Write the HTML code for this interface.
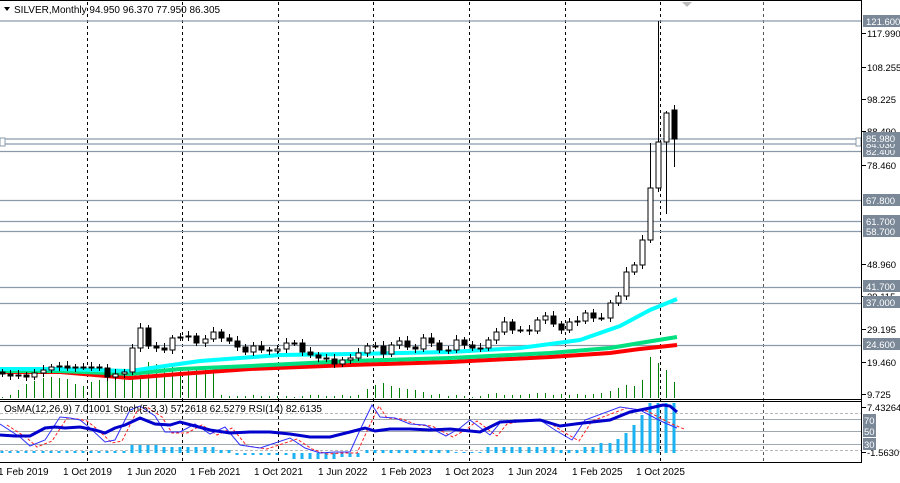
<!DOCTYPE html>
<html><head><meta charset="utf-8"><style>
html,body{margin:0;padding:0;background:#fff;width:900px;height:483px;overflow:hidden}
svg{display:block;font-family:"Liberation Sans",Arial,sans-serif;font-size:10px}
#axis{font-size:9.5px}
</style></head><body>
<svg id="c" width="900" height="483" viewBox="0 0 900 483" xmlns="http://www.w3.org/2000/svg">
<rect width="900" height="483" fill="#fff"/>
<g id="grid" stroke="#000" stroke-width="1" stroke-dasharray="3,3">
<line x1="87.5" y1="2" x2="87.5" y2="463"/><line x1="182.5" y1="2" x2="182.5" y2="463"/>
<line x1="278.5" y1="2" x2="278.5" y2="463"/><line x1="373.5" y1="2" x2="373.5" y2="463"/>
<line x1="469.5" y1="2" x2="469.5" y2="463"/><line x1="565.5" y1="2" x2="565.5" y2="463"/>
<line x1="660.5" y1="2" x2="660.5" y2="463"/><line x1="763.5" y1="2" x2="763.5" y2="463" stroke="#555"/>
</g>
<g stroke="#8a9aaa" stroke-width="1.3">
<line x1="0" y1="21" x2="861" y2="21"/><line x1="0" y1="139" x2="861" y2="139"/>
<line x1="0" y1="144" x2="861" y2="144"/><line x1="0" y1="151.5" x2="861" y2="151.5"/>
<line x1="0" y1="200.5" x2="861" y2="200.5"/><line x1="0" y1="221.5" x2="861" y2="221.5"/>
<line x1="0" y1="231.5" x2="861" y2="231.5"/><line x1="0" y1="287.5" x2="861" y2="287.5"/>
<line x1="0" y1="303.5" x2="861" y2="303.5"/><line x1="0" y1="345.5" x2="861" y2="345.5"/>
</g>
<rect x="0" y="138" width="5" height="8" fill="#fff" stroke="#8a9aaa"/>
<rect x="856" y="138" width="5" height="8" fill="#fff" stroke="#8a9aaa"/>
<g id="vol" stroke="#008000" stroke-width="1"></g>
<g id="ma" fill="none" stroke-width="4" stroke-linejoin="round"></g>
<g id="cdl"></g>
<g stroke="#a0a8b0" stroke-width="1">
<line x1="0" y1="419.5" x2="861" y2="419.5"/><line x1="0" y1="431.5" x2="861" y2="431.5"/><line x1="0" y1="444.5" x2="861" y2="444.5"/>
</g>
<g stroke="#b8b8b8" stroke-dasharray="3,2"><line x1="0" y1="413.5" x2="861" y2="413.5"/><line x1="0" y1="450.5" x2="861" y2="450.5"/></g>
<g id="ind"></g>
<line x1="0" y1="0.5" x2="862" y2="0.5" stroke="#000"/>
<line x1="861.5" y1="0" x2="861.5" y2="463" stroke="#000"/>
<line x1="0" y1="399.5" x2="862" y2="399.5" stroke="#000"/>
<line x1="0" y1="401.5" x2="862" y2="401.5" stroke="#000"/>
<line x1="0" y1="462.5" x2="862" y2="462.5" stroke="#000"/>
<polygon points="682,2 692,2 687,7" fill="#bbb"/>
<polygon points="4,7 10,7 7,11" fill="#000"/>
<text x="14" y="13" fill="#000">SILVER,Monthly  94.950 96.370 77.950 86.305</text>
<text x="4" y="412" fill="#000">OsMA(12,26,9) 7.01001  Stoch(5,3,3) 57.2618 62.5279  RSI(14) 82.6135</text>
<g id="axis" fill="#000"></g>
<g fill="#000">
<text x="-2" y="475">1 Feb 2019</text><text x="63" y="475">1 Oct 2019</text><text x="127" y="475">1 Jun 2020</text>
<text x="190" y="475">1 Feb 2021</text><text x="254" y="475">1 Oct 2021</text><text x="318" y="475">1 Jun 2022</text>
<text x="381" y="475">1 Feb 2023</text><text x="445" y="475">1 Oct 2023</text><text x="508" y="475">1 Jun 2024</text>
<text x="572" y="475">1 Feb 2025</text><text x="636" y="475">1 Oct 2025</text>
</g>
</svg>
<script>
(function(){
var NS="http://www.w3.org/2000/svg";
function el(p,t,a,txt){var e=document.createElementNS(NS,t);for(var k in a)e.setAttribute(k,a[k]);if(txt!=null)e.textContent=txt;document.getElementById(p).appendChild(e);return e;}
var closes=[374,376,375,377,373,370,367,366,368,367,367,367,368,377,374,372,348,328,346,348,350,338,337,336,343,339,332,338,341,347,352,346,350,351,349,343,343,352,355,358,359,364,360,358,353,346,346,354,345,341,347,349,338,343,350,350,340,345,348,348,340,332,322,330,330,331,320,316,324,330,322,321,313,318,318,303,296,272,265,240,188,142,113,139];
var opens=[];var prev=372;
for(var i=0;i<closes.length;i++){opens.push(prev);prev=closes[i];}
opens[83]=110;
var vols=[397,395,390,384,381,378,377,378,379,384,386,382,380,378,375,375,373,369,362,364,366,367,368,369,368,369,369,395,396,396,396,395,396,396,396,396,397,396,395,395,396,396,395,396,395,389,385,383,386,388,389,390,392,395,394,396,395,396,397,396,394,393,395,395,395,394,393,393,395,394,395,394,395,394,393,391,388,385,386,380,357,363,370,382];
for(var i=0;i<closes.length;i++){
 var x=Math.round(2+i*8.1)+0.5;var o=opens[i],c=closes[i];
 var tp=Math.min(o,c),bt=Math.max(o,c);
 var hi=tp-3-(i%3),lo=bt+3+(i%2);
 if(i==81)hi=21; if(i==83){hi=105;lo=167;} if(i==82){hi=111;lo=214;} if(i==80)hi=143; if(i==79)hi=235;
 el("vol","line",{x1:x,y1:vols[i],x2:x,y2:398});
 el("cdl","line",{x1:x,y1:hi,x2:x,y2:lo,stroke:"#000"});
 var h=Math.max(bt-tp,1);
 el("cdl","rect",{x:x-2.5,y:tp,width:5,height:h,fill:(c<o?"#fff":"#000"),stroke:"#000"});
}
function pl(g,pts,st){var s=pts.map(function(p){return p[0]+","+p[1]}).join(" ");var a={points:s,fill:"none"};for(var k in st)a[k]=st[k];el(g,"polyline",a);}
pl("ma",[[0,372],[60,372],[130,378],[180,374],[250,369],[350,365],[450,362],[550,357],[610,353],[640,349],[677,345]],{stroke:"#ff0000"});
pl("ma",[[0,371],[60,371],[130,374],[180,369],[250,366],[350,361],[450,358],[550,353],[610,348],[640,343],[677,337]],{stroke:"#00e080"});
pl("ma",[[0,369],[60,369],[130,371],[200,361],[280,355],[350,354],[450,352],[520,348],[580,340],[620,326],[650,310],[677,299]],{stroke:"#00ffff"});
for(var i=0;i<84;i++){var x=Math.round(2+i*8.1);var v;
 if(i<16)v=-2; else if(i<20)v=-8; else if(i<27)v=-6; else if(i<29)v=-3; else if(i<36)v=2; else if(i<42)v=6; else if(i<45)v=4; else if(i<56)v=-3; else if(i<60)v=-1;
 else if(i<69)v=-6; else if(i<72)v=-3; else if(i<74)v=-6; else if(i<76)v=-10;
 else v=[-14,-20,-28,-38,-50,-50,-50,-50][i-76];
 var y0=453; el("ind","rect",{x:x-1.5,y:Math.min(y0,y0+v),width:3,height:Math.abs(v)||1,fill:"#1ab2f0"});
}
var rsi=[[0,435],[15,436],[30,436],[45,428],[55,427],[65,428],[80,427],[95,430],[105,433],[115,428],[125,425],[140,418],[155,424],[170,425],[180,422],[195,426],[210,430],[230,433],[250,432],[270,432],[290,434],[310,437],[330,437],[350,432],[365,428],[375,431],[390,429],[410,429],[430,430],[450,429],[480,432],[500,422],[540,420],[560,426],[583,423],[610,420],[630,412],[650,408],[663,405],[670,406],[677,412]];
var st=[[0,424],[20,437],[30,446],[45,440],[60,417],[70,418],[80,420],[90,428],[105,442],[115,440],[125,420],[130,410],[140,406],[155,416],[165,432],[180,432],[195,424],[210,434],[225,427],[240,445],[260,448],[275,443],[290,438],[305,448],[320,453],[335,452],[350,452],[360,430],[372,405],[380,417],[395,418],[410,424],[425,425],[446,436],[460,428],[470,420],[490,435],[500,423],[515,420],[540,420],[555,430],[572,440],[585,420],[620,407],[640,410],[655,418],[665,423],[677,428]];
pl("ind",st.map(function(p){return [p[0]+7,p[1]+1]}),{stroke:"#ff2020","stroke-dasharray":"3,2","stroke-width":1});
pl("ind",st,{stroke:"#3030ff","stroke-width":1});
pl("ind",rsi,{stroke:"#0000cc","stroke-width":3});
var plain=[[33,"117.990"],[67,"108.255"],[99,"98.225"],[131,"88.490"],[165,"78.460"],[264,"48.960"],[296,"39.115"],[329,"29.195"],[362,"19.460"],[394,"9.725"],[407,"7.43264"],[452,"-1.56309"]];
plain.forEach(function(p){el("axis","line",{x1:862,y1:p[0]+0.5,x2:866,y2:p[0]+0.5,stroke:"#000"});el("axis","text",{x:867,y:p[0]+4},p[1]);});
var boxes=[[21,"121.600"],[151,"82.400"],[144,"84.030"],[138,"85.980"],[200,"67.800"],[221,"61.700"],[231,"58.700"],[286,"41.700"],[302,"37.000"],[344,"24.600"]];
boxes.forEach(function(p){el("axis","rect",{x:863,y:p[0]-6,width:37,height:12,fill:"#7a8898"});el("axis","text",{x:866,y:p[0]+4,fill:"#fff"},p[1]);});
[[420,"70"],[431,"50"],[444,"30"]].forEach(function(p){el("axis","rect",{x:863,y:p[0]-6,width:13,height:12,fill:"#7a8898"});el("axis","text",{x:864,y:p[0]+4,fill:"#fff"},p[1]);});
})();
</script>
</body></html>
